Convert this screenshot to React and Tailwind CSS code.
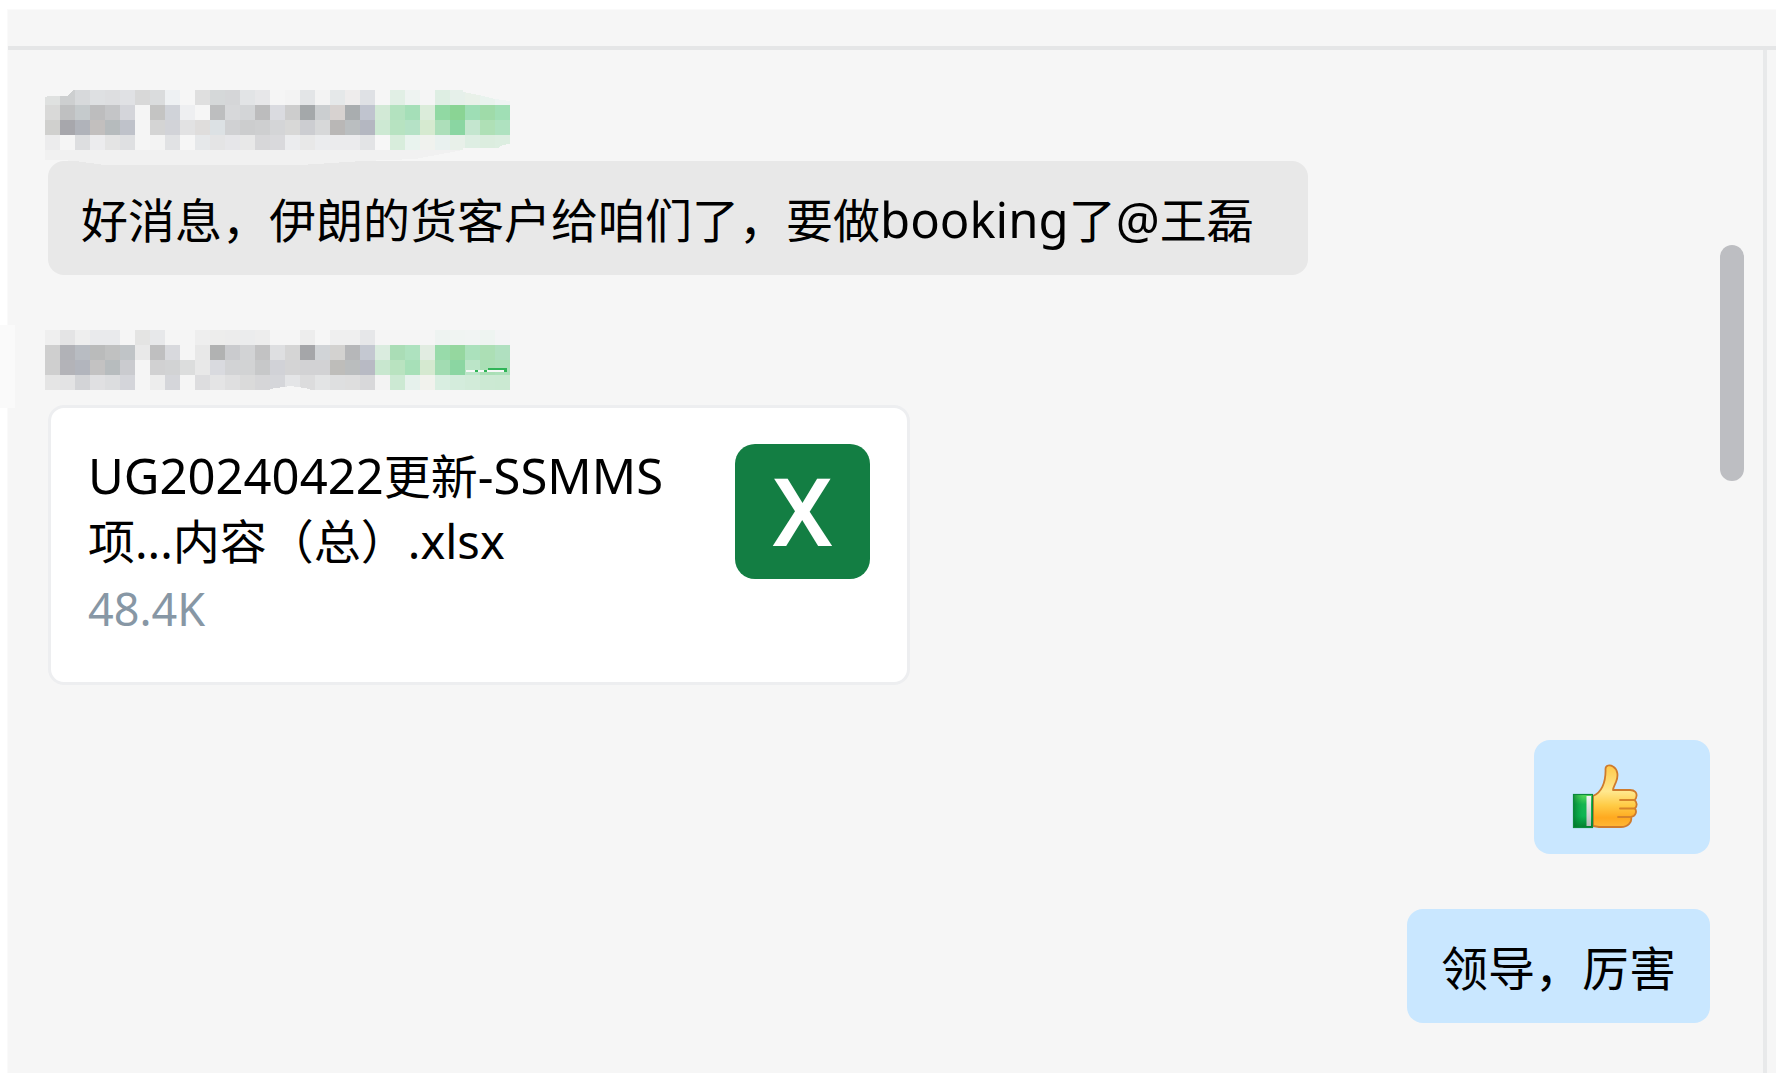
const FIRST_SENDER = [
  "dfe1e0 cdcfd0 d7d9db dee0e2 dddee0 e0e1e4 d8d8d8 dadcdd eef1f3 f6f6f6 dfdfdf d5d8d9 d5d6d8 e2e4e6 e7e7e9 f5f5f5 f3f3f3 e3e5e7 f3f3f3 e5e8e9 eeecec dfe1e5 f6f6f6 e1efe5 eef3f1 f5f5f5 deeee3 e6f0ea e9f1e9 e9f3ee eef4f3",
  "d9d9d8 bfc0c1 c5cacc bdbdbe c4c5c7 d4d5da f5f5f5 c4c4c3 d0d3d9 eeeff1 f6f6f6 bdbebf d7d8da d3d5d7 bcbcbd dadbe0 cdcdcd a4a8aa cbced0 d7d2d0 a9adaf c0c4cf d2e9d6 b3e2bf a5dfb8 dbecda 91d9a3 8ad494 9edeb5 9fdba9 a0dfb5",
  "d0d0ce a7a7ac b0b3ba c2bfbe b6bbbd bfc2ca f5f5f5 d4d4d4 d2d3d8 e2e2e3 dfdddc dce1e4 d0d1d3 cccdce cecfd0 d4d5d7 d8d8d7 cccdd1 d7d8d9 b9b7b6 babec0 b4b7c1 cde9d3 b7e3c1 b5e2c6 d6ead0 addfba 8ad6a2 c4e6cf afe0b6 afe2c0",
  "ececed f5f5f5 dddee0 ececee e4e4e4 dfe0e2 f5f5f5 f3f3f3 e1e2e4 f6f6f6 e6e8ea e4e4e5 e6e6e9 e8e8e8 d7d7d9 d9d9dc ebecee e8e8e8 ebecee ebebed ebebed e3e4e6 f7f7f7 d8eddc e9f3ee f0f2ee e9f1ef e8f0e9 deeee3 dceddf ddeee1",
];

const SECOND_SENDER = [
  "efefef e4e4e5 eeeeee e9eaec e9eaec f5f5f5 e4e4e3 e7e8ea f5f5f5 f5f5f5 eeeeee ededec ececec ebeced ededed f5f5f5 f5f5f5 ededed f6f6f6 efefef efefef e6e7e9 f5f5f5 f5f5f5 f5f5f5 f5f5f5 eef3f1 f0f4f2 f1f4f3 eef4f1 f3f4f5",
  "cfcfcf b1b2b7 b8bcc2 babbbb c0c1c1 c0c4c7 e9e9e9 bfbfc0 d8d9dd f5f5f5 e8e8e8 b1b2b2 cacbce d2d3d5 c2c2c3 dedfe1 d5d5d5 a5a6a9 d1d4d7 d3d2d0 b6b7b9 c4c8d1 daecdf aaddb6 aee2bf e1ece1 98dbaa 95d79f abe1bc acdfb5 b0e0c0",
  "cfcfcf b3b3b8 b2b5bd c3c2c2 b7bcbe cacbcf f5f5f5 d1d1d2 d2d3d4 dcdddd e8e8e8 d9dadf d2d3d5 d2d3d4 c7c8c9 d1d2d7 d4d4d5 d2d2d4 d2d2d4 bebdba babdbe b8bac4 c8e7cf b9e3c0 a7e0b8 d5e9d0 a2dcb2 8bd6a2 bbe5c8 aadfb5 ace0b9",
  "e5e5e5 e3e3e4 d3d4d7 e0e0e2 dcdddf d4d5da f5f5f5 ededed d5d6da f5f5f5 dddddf e4e4e5 dfdfe0 dadada d6d6d8 d5d6da e4e5e7 dcdcdd e3e4e5 dedfe0 dedede d8d8da f3f3f3 cce9d3 e6f1ec f1f2ed d9eee1 d4ecdc d2ebd9 cce9d3 cbe9d2",
];

function Mosaic({ rows, children }) {
  return (
    <svg
      width="465"
      height="60"
      viewBox="0 0 465 60"
      shapeRendering="crispEdges"
      className="relative -ml-[3px] block overflow-visible"
      aria-hidden="true"
    >
      {rows.map((row, y) =>
        row.split(" ").map((color, x) => (
          <rect key={`${x}-${y}`} x={x * 15} y={y * 15} width="15" height="15" fill={`#${color}`} />
        ))
      )}
      {children}
    </svg>
  );
}

function Latin({ children }) {
  return <span className="text-[49px] leading-none">{children}</span>;
}

function ThumbsUp() {
  return (
    <svg width="66" height="66" viewBox="0 0 66 66" role="img" aria-label="赞" className="block">
      <defs>
        <linearGradient id="cuff" x1="0" y1="0" x2="0" y2="1">
          <stop offset="0" stopColor="#5fdc5c" />
          <stop offset="0.3" stopColor="#17b551" />
          <stop offset="0.65" stopColor="#0cb552" />
          <stop offset="1" stopColor="#047a2b" />
        </linearGradient>
        <linearGradient id="cuffShade" x1="0" y1="0" x2="1" y2="0">
          <stop offset="0" stopColor="#006b28" stopOpacity="0.7" />
          <stop offset="0.5" stopColor="#00a040" stopOpacity="0" />
        </linearGradient>
        <linearGradient id="trim" x1="0" y1="0" x2="0" y2="1">
          <stop offset="0" stopColor="#f4f4f4" />
          <stop offset="1" stopColor="#b9bcbb" />
        </linearGradient>
        <linearGradient id="skin" x1="0" y1="0" x2="0" y2="1">
          <stop offset="0" stopColor="#ffc94a" />
          <stop offset="0.42" stopColor="#ffe88e" />
          <stop offset="0.65" stopColor="#ffcb45" />
          <stop offset="0.85" stopColor="#ffa91f" />
          <stop offset="1" stopColor="#ffb735" />
        </linearGradient>
      </defs>
      <path
        d="M21 32 C29 29 34 19 33.500 5 C33.500 1 38 .5 41 2.500 C46 5.500 46.500 12 44 18 C42.500 21.500 41 24 41 26 H58 C63 26 65 29 64.500 32 C64.300 34 63.500 35.500 62.500 36 C65 38 65.500 42 63 44.500 C65 47.500 64 52 59 53 C60.500 58 56 63 49 63 H27 L21 62 Z"
        fill="url(#skin)"
        stroke="#cf7b2c"
        strokeWidth="1.800"
        strokeLinejoin="round"
      />
      <path
        d="M48 36 H62 M48 44.500 H63 M46 53 H59"
        fill="none"
        stroke="#d68429"
        strokeWidth="1.800"
        strokeLinecap="round"
      />
      <rect x="1" y="30" width="20" height="34" fill="url(#cuff)" />
      <rect x="1" y="30" width="20" height="34" fill="url(#cuffShade)" />
      <rect x="14.500" y="32" width="4.500" height="30" fill="url(#trim)" />
      <rect x="1.500" y="30.500" width="19" height="33" fill="none" stroke="#0b8a3d" strokeWidth="1.200" />
    </svg>
  );
}

export default function App() {
  return (
    <div className="relative min-h-screen bg-white pt-[9px] pl-[7px] font-['Noto_Sans','Noto_Sans_CJK_SC',sans-serif] text-[47px] leading-[66px] text-black">
      <div className="flex min-h-[calc(100vh-9px)] flex-col border-t border-l border-[#fafafa] bg-[#f6f6f6]">
        <header className="h-10 shrink-0 border-b-4 border-[#e5e6e7]" />
        <div className="flex grow">
          <main className="flex min-w-0 grow flex-col pt-10 pr-[10px] pl-10">
            <ol className="flex flex-col gap-[55px]">
              <li className="flex flex-col items-start gap-[11px]">
                <Mosaic rows={FIRST_SENDER}>
                  <path d="M0 0 H28 L23 6 H4 L0 7 Z" fill="#f6f6f6" />
                  <path d="M418 0 H465 V11 L450 9 L434 5 L418 2 Z" fill="#f6f6f6" />
                  <path d="M418 60 V58 H453 L458 55 L475 52 L465 50 V60 Z" fill="#f6f6f6" />
                  <path d="M0 60 H418 L370 69 L318 71 L255 75 H60 L30 71 L15 70 H0 Z" fill="#f1f1f1" />
                </Mosaic>
                <p className="rounded-[16px] bg-[#e8e8e8] pt-[26px] pr-[54px] pb-[22px] pl-[33px]">
                  好消息，伊朗的货客户给咱们了，要做<Latin>booking</Latin>了<Latin>@</Latin>王磊
                </p>
              </li>
              <li className="flex flex-col items-start gap-[15px]">
                <Mosaic rows={SECOND_SENDER}>
                  <path d="M225 60 V59 L245 56 L253 57 L265 59 V60 Z" fill="#f6f6f6" />
                  <path d="M421 41 h9 M433 41 h6 M442 41 h18" stroke="#f7f7f7" strokeWidth="2" />
                  <path d="M430 41 h3 M439 41 h3 M443 39 h19 M459 41 h3" stroke="#2fb457" strokeWidth="2" />
                </Mosaic>
                <a
                  href="#file"
                  className="flex w-[862px] max-w-full items-start justify-between rounded-[16px] border-[3px] border-[#edeef0] bg-white pt-[36px] pr-[37px] pb-[41px] pl-[37px]"
                >
                  <span className="flex flex-col">
                    <span className="leading-[65px]">
                      <Latin>UG20240422</Latin>更新<Latin>-SSMMS</Latin>
                      <br />
                      项...内容（总）.xlsx
                    </span>
                    <span className="pt-0.5 text-[45px] leading-[65px] text-[#8797a5]">48.4K</span>
                  </span>
                  <span className="flex size-[135px] shrink-0 items-center justify-center rounded-[20px] bg-[#137e43] pb-1 text-[94px] font-semibold text-white">
                    X
                  </span>
                </a>
              </li>
              <li className="flex justify-end">
                <div className="rounded-[16px] bg-[#c9e7ff] py-6 pr-[72px] pl-[38px]">
                  <ThumbsUp />
                </div>
              </li>
              <li className="flex justify-end">
                <p className="rounded-[16px] bg-[#c9e7ff] px-[34px] pt-[26px] pb-[22px]">领导，厉害</p>
              </li>
            </ol>
          </main>
          <div className="w-[43px] shrink-0 pt-[195px]">
            <div className="h-[236px] w-6 rounded-full bg-[#bdbec2]" />
          </div>
          <div className="w-[13px] shrink-0 border-l-4 border-[#e8e9ea]" />
        </div>
      </div>
      <div className="absolute top-[325px] left-0 h-[83px] w-[15px] bg-[#fafafa]" />
    </div>
  );
}
